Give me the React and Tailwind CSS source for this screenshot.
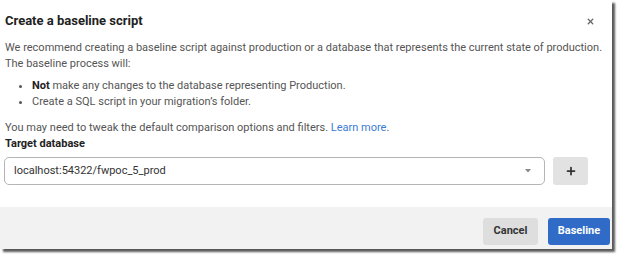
import React from 'react';
import { X, Plus } from 'lucide-react';

const App = () => {
  return (
    <div className="w-[617px] h-[254px] bg-white" style={{ fontFamily: 'Roboto, "Liberation Sans", sans-serif' }}>
      <div className="w-[612px] h-[249px] bg-white flex flex-col shadow-[3px_3px_2px_rgba(0,0,0,0.65)]">
        {/* Header */}
        <div className="flex items-start justify-between pl-[5px] pr-[17px] pt-[12px] h-[40px]">
          <h3 className="text-[13px] leading-[18px] font-bold text-[#222]">Create a baseline script</h3>
          <button className="text-[#666] mt-[5px]">
            <X className="w-[9px] h-[9px]" strokeWidth={3.5} />
          </button>
        </div>

        {/* Body */}
        <div className="px-[5px] text-[11px] text-[#555] leading-[16px] flex-1">
          <p>
            We recommend creating a baseline script against production or a database that represents the current state of production.
            <br />
            The baseline process will:
          </p>
          <ul className="list-disc pl-[27px] mt-[6px]">
            <li><span className="font-bold text-[#222]">Not</span> make any changes to the database representing Production.</li>
            <li>Create a SQL script in your migration’s folder.</li>
          </ul>
          <p className="mt-[10px]">
            You may need to tweak the default comparison options and filters. <span className="text-[#3b7bd4]">Learn more</span>.
          </p>
          <p className="font-bold text-[#222]">Target database</p>

          <div className="flex items-center gap-[8px] mt-[5px] -ml-[1px]">
            <div className="w-[541px] h-[28px] border border-[#b5b5b5] rounded-[5px] flex items-center justify-between pl-[9px] pr-[13px] text-[#333]">
              <span>localhost:54322/fwpoc_5_prod</span>
              <svg width="6" height="4" viewBox="0 0 6 4"><path d="M0 0h6L3 3.5z" fill="#888" /></svg>
            </div>
            <button className="w-[35px] h-[28px] bg-[#e2e2e2] rounded-[3px] flex items-center justify-center text-[#333]">
              <Plus className="w-[12px] h-[12px]" strokeWidth={3.5} />
            </button>
          </div>
        </div>

        {/* Footer */}
        <div className="h-[42px] bg-[#f2f2f2] flex items-start justify-end gap-[10px] pr-[2px] pt-[11px]">
          <button className="h-[27px] w-[55px] bg-[#dedede] rounded-[3px] text-[11px] font-bold text-[#333]">Cancel</button>
          <button className="h-[27px] w-[62px] bg-[#2f6bc7] rounded-[3px] text-[11px] font-bold text-white">Baseline</button>
        </div>
      </div>
    </div>
  );
};

export default App;
